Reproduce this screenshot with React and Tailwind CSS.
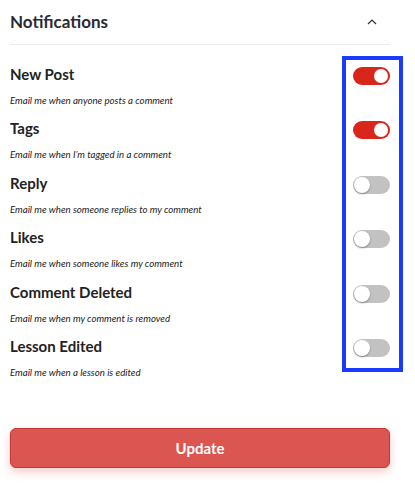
import React from "react";

const rows = [
  { title: "New Post", desc: "Email me when anyone posts a comment", on: true },
  { title: "Tags", desc: "Email me when I’m tagged in a comment", on: true },
  { title: "Reply", desc: "Email me when someone replies to my comment", on: false },
  { title: "Likes", desc: "Email me when someone likes my comment", on: false },
  { title: "Comment Deleted", desc: "Email me when my comment is removed", on: false },
  { title: "Lesson Edited", desc: "Email me when a lesson is edited", on: false },
];

function Toggle({ on }) {
  return on ? (
    <div className="relative w-[37px] h-[18px] rounded-full bg-[#d8261b] mt-[3px] shrink-0">
      <div className="absolute right-[2px] top-[2px] w-[14px] h-[14px] rounded-full bg-white"></div>
    </div>
  ) : (
    <div className="relative w-[37px] h-[18px] rounded-full bg-[#c2c2c2] mt-[3px] shrink-0">
      <div className="absolute left-[1px] top-[1px] w-[16px] h-[16px] rounded-full bg-white shadow-[0_1px_2px_rgba(0,0,0,0.35)]"></div>
    </div>
  );
}

export default function App() {
  return (
    <div className="relative w-[415px] h-[485px] bg-white px-[10px] pr-[25px] text-[#222]" style={{ fontFamily: "Lato, 'Noto Sans', sans-serif" }}>
      <div className="flex items-center justify-between pt-[10px] pb-[10px] border-b border-[#ececec]">
        <div className="text-[17px] leading-[24px] font-bold text-[#2a2a33]">Notifications</div>
        <svg width="10" height="7" viewBox="0 0 10 7" className="mr-[13px] mb-[1px]">
          <polyline points="1,6 5,2 9,6" fill="none" stroke="#333" strokeWidth="1.2" />
        </svg>
      </div>
      <div className="flex flex-col pt-[19px]">
        {rows.map((r) => (
          <div key={r.title} className="flex justify-between items-start h-[54.4px]">
            <div className="flex flex-col">
              <div className="text-[15px] leading-[20px] font-bold text-[#222]">{r.title}</div>
              <div className="text-[9.7px] leading-[14px] italic mt-[9px] text-[#222]">{r.desc}</div>
            </div>
            <Toggle on={r.on} />
          </div>
        ))}
      </div>
      <div className="absolute left-[342px] top-[56px] w-[61px] h-[316px] border-4 border-[#1a3bff]"></div>
      <button className="absolute left-[10px] top-[428px] w-[380px] h-[40px] rounded-[6px] bg-[#db5551] border border-[#c8342f] text-white text-[15px] font-bold shadow-[0_4px_10px_rgba(219,85,81,0.3)]">
        Update
      </button>
    </div>
  );
}
